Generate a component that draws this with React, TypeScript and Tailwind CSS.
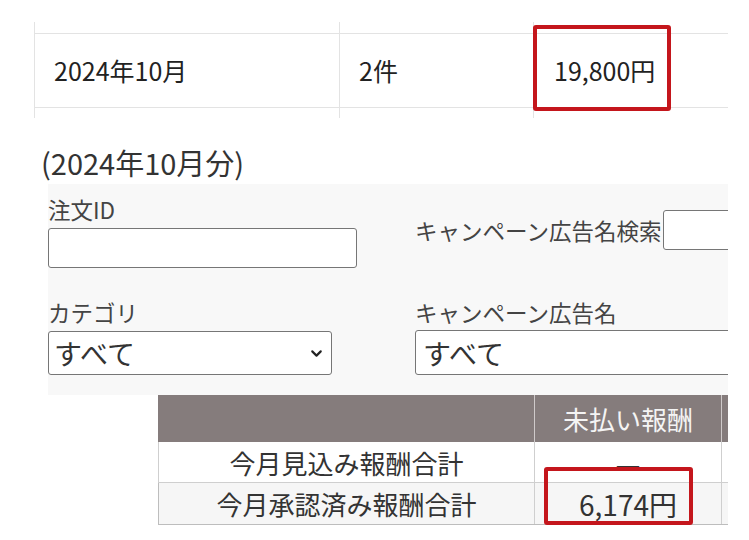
import { ChevronDown } from 'lucide-react';

const cellLine = 'border-l border-[#e3e3e3]';

function TopTable() {
  return (
    <div className="ml-[34px] w-[760px] text-[25px] text-[#222]">
      <div className="flex h-[11px]">
        <div className={`w-[305px] ${cellLine}`} />
        <div className={`w-[194px] ${cellLine}`} />
        <div className={`w-[261px] ${cellLine}`} />
      </div>
      <div className="flex h-[75px] border-y border-[#e3e3e3]">
        <div className={`flex w-[305px] items-center pl-[19px] ${cellLine}`}>2024年10月</div>
        <div className={`flex w-[194px] items-center pl-[19px] ${cellLine}`}>2件</div>
        <div className={`flex w-[261px] items-center pl-[20px] ${cellLine}`}>19,800円</div>
      </div>
      <div className="flex h-[10px]">
        <div className={`w-[305px] ${cellLine}`} />
        <div className={`w-[194px] ${cellLine}`} />
        <div className={`w-[261px] ${cellLine}`} />
      </div>
    </div>
  );
}

function FilterPanel() {
  return (
    <div className="ml-[48px] mt-[3px] w-[700px] bg-[#f8f8f8] pb-[20px] text-[22.5px] leading-[30px] text-[#444]">
      <div className="flex">
        <div className="w-[367px] shrink-0 pt-[10px]">
          <div>注文ID</div>
          <div className="mt-[4px] h-[40px] w-[309px] rounded-[3px] border border-[#767676] bg-white" />
        </div>
        <div className="flex shrink-0 items-center self-start pt-[26px] whitespace-nowrap">
          <span>キャンペーン広告名検索</span>
          <div className="ml-[2px] h-[40px] w-[200px] rounded-[3px] border border-[#767676] bg-white" />
        </div>
      </div>
      <div className="mt-[29px] flex">
        <div className="w-[367px] shrink-0">
          <div>カテゴリ</div>
          <div className="mt-[4px] flex h-[44px] w-[284px] items-center justify-between rounded-[3px] border border-[#767676] bg-white pl-[5px] pr-[6px] text-[28px] text-[#333]">
            <span>すべて</span>
            <ChevronDown size={17} strokeWidth={3} className="text-[#222]" />
          </div>
        </div>
        <div className="shrink-0">
          <div>キャンペーン広告名</div>
          <div className="mt-[3px] flex h-[45px] w-[340px] items-center rounded-[3px] border border-[#767676] bg-white pl-[7px] text-[28px] text-[#333]">
            すべて
          </div>
        </div>
      </div>
    </div>
  );
}

function RewardTable() {
  return (
    <div className="ml-[158px] w-[640px] text-[26px] text-[#333]">
      <div className="flex h-[47px] bg-[#857c7c] text-[#f4f4f4]">
        <div className="w-[377px] shrink-0 border-r border-[#cfcaca]" />
        <div className="flex w-[187px] shrink-0 items-center justify-center border-r border-[#cfcaca]">未払い報酬</div>
        <div className="flex-1" />
      </div>
      <div className="flex h-[41px] border-b border-l border-[#cfcfcf] bg-white">
        <div className="flex w-[376px] shrink-0 items-center justify-center border-r border-[#cfcfcf]">今月見込み報酬合計</div>
        <div className="flex w-[187px] shrink-0 items-center justify-center border-r border-[#cfcfcf] pt-[4px]">―</div>
        <div className="flex-1" />
      </div>
      <div className="flex h-[42px] border-b border-l border-[#bdbdbd] bg-[#f6f6f6]">
        <div className="flex w-[376px] shrink-0 items-center justify-center border-r border-[#cfcfcf]">今月承認済み報酬合計</div>
        <div className="flex w-[187px] shrink-0 items-center justify-center border-r border-[#cfcfcf] text-[28px]">6,174円</div>
        <div className="flex-1" />
      </div>
    </div>
  );
}

export default function App() {
  return (
    <div className="h-[540px] w-[749px] bg-white font-['Noto_Sans_CJK_JP',sans-serif]">
      <div className="relative h-[540px] w-[728px] overflow-hidden pt-[22px]">
        <TopTable />
        <h2 className="ml-[41px] mt-[25px] h-[38px] text-[29px] leading-[38px] text-[#333]">(2024年10月分)</h2>
        <FilterPanel />
        <RewardTable />

        {/* highlight boxes */}
        <div className="absolute left-[533px] top-[25px] h-[86px] w-[138px] rounded-[3px] border-4 border-[#c4161c]" />
        <div className="absolute left-[544px] top-[467px] h-[58px] w-[149px] rounded-[3px] border-4 border-[#c4161c]" />
      </div>
    </div>
  );
}
